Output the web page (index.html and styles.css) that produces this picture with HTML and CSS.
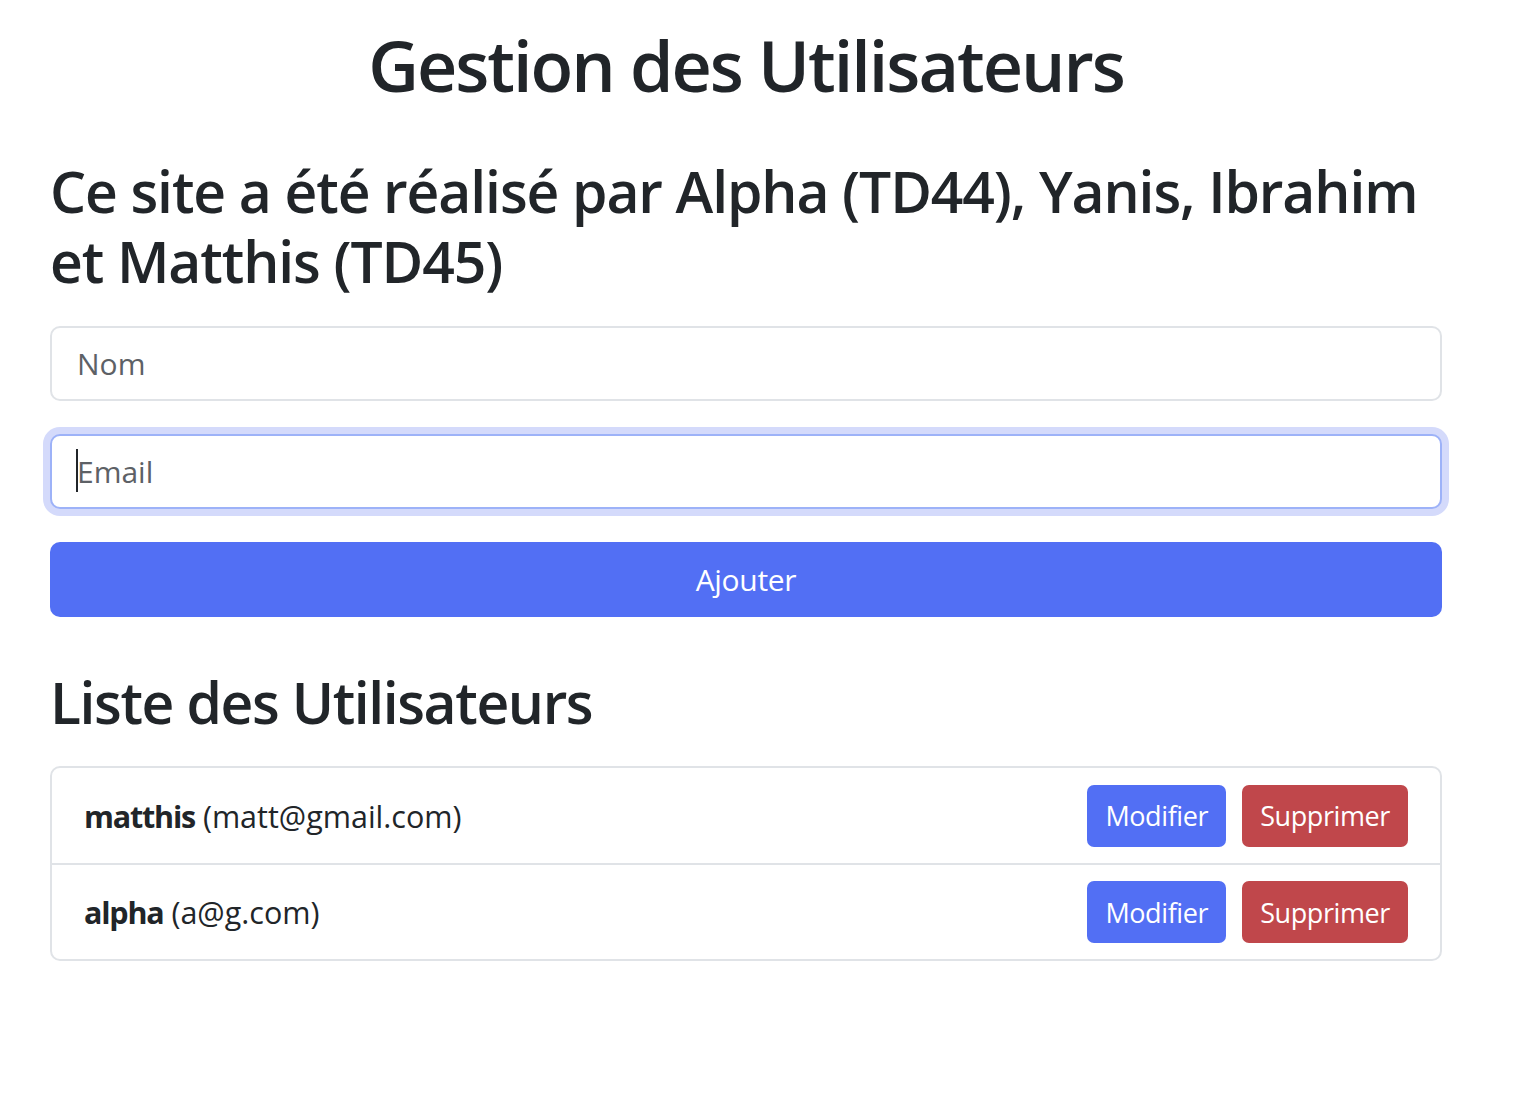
FILE: index.html
```html
<!DOCTYPE html>
<html lang="fr">
<head>
<meta charset="utf-8">
<title>Gestion des Utilisateurs</title>
<link rel="stylesheet" href="styles.css">
</head>
<body>
<div class="container">
  <h1 class="title">Gestion des Utilisateurs</h1>
  <h2 class="subtitle">Ce site a été réalisé par Alpha (TD44), Yanis, Ibrahim et Matthis (TD45)</h2>
  <form class="form">
    <input class="field" type="text" placeholder="Nom">
    <div class="field-wrap">
      <input class="field field-focus" type="email" placeholder="Email">
      <span class="caret"></span>
    </div>
    <button class="btn-add" type="button">Ajouter</button>
  </form>
  <h2 class="list-title">Liste des Utilisateurs</h2>
  <ul class="list">
    <li class="item">
      <span class="user"><strong>matthis</strong> (matt@gmail.com)</span>
      <span class="actions"><button class="btn btn-edit" type="button">Modifier</button><button class="btn btn-del" type="button">Supprimer</button></span>
    </li>
    <li class="item">
      <span class="user"><strong>alpha</strong> (a@g.com)</span>
      <span class="actions"><button class="btn btn-edit" type="button">Modifier</button><button class="btn btn-del" type="button">Supprimer</button></span>
    </li>
  </ul>
</div>
</body>
</html>
```

FILE: styles.css
```css
* { box-sizing: border-box; }
html, body { margin: 0; padding: 0; background: #fff; }
body {
  font-family: "Open Sans", "Noto Sans", sans-serif;
  color: #212529;
}
.container {
  width: 1392px;
  margin-left: 50px;
  padding-top: 22px;
}
.title {
  margin: 0;
  text-align: center;
  font-size: 70px;
  line-height: 86px;
  font-weight: 600;
  letter-spacing: -2px;
}
.subtitle {
  margin: 48px 0 0;
  font-size: 57px;
  line-height: 70px;
  font-weight: 600;
  letter-spacing: -1.1px;
}
.form {
  margin-top: 30px;
  display: flex;
  flex-direction: column;
}
.field {
  display: block;
  width: 100%;
  height: 75px;
  margin: 0;
  padding: 0 25px;
  font-family: inherit;
  font-size: 30px;
  color: #212529;
  background: #fff;
  border: 2px solid #e0e3e7;
  border-radius: 10px;
  outline: none;
}
.field::placeholder { color: #5d6166; opacity: 1; }
.field-wrap {
  position: relative;
  margin-top: 33px;
}
.field-focus {
  border-color: #9db2f8;
  box-shadow: 0 0 0 7px #d4dafb;
}
.caret {
  position: absolute;
  left: 26px;
  top: 15px;
  width: 2px;
  height: 43px;
  background: #212529;
}
.btn-add {
  margin-top: 33px;
  height: 75px;
  width: 100%;
  border: none;
  border-radius: 10px;
  background: #526ff4;
  color: #fff;
  font-family: inherit;
  font-size: 30px;
  letter-spacing: -0.3px;
  cursor: pointer;
}
.list-title {
  margin: 50px 0 0;
  font-size: 57px;
  line-height: 70px;
  font-weight: 600;
  letter-spacing: -1.4px;
}
.list {
  list-style: none;
  margin: 29px 0 0;
  padding: 0;
  border: 2px solid #e0e3e7;
  border-radius: 10px;
}
.item {
  display: flex;
  align-items: center;
  justify-content: space-between;
  height: 95px;
  padding: 0 32px 0 32px;
  font-size: 30.5px;
}
.item + .item {
  height: 96px;
  border-top: 2px solid #e0e3e7;
}
.user strong { font-weight: 700; letter-spacing: -1.2px; }
.actions { display: flex; gap: 16px; }
.btn {
  height: 62px;
  padding: 0 18px;
  border: none;
  border-radius: 7px;
  color: #fff;
  font-family: inherit;
  font-size: 27px;
  letter-spacing: -0.4px;
  cursor: pointer;
}
.btn-edit { background: #526ff4; }
.btn-del { background: #c0474b; }
```
